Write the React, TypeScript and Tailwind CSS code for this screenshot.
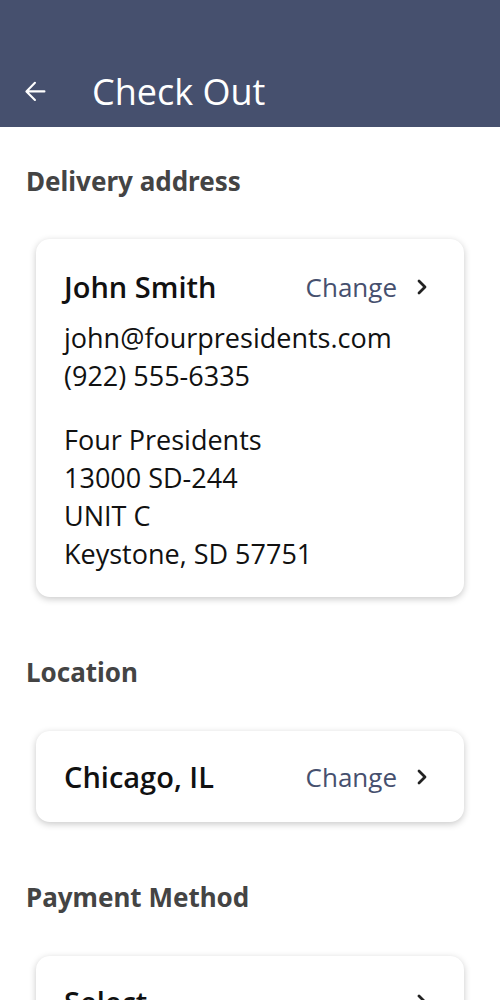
import React from "react";

const Chevron = () => (
  <svg width="12" height="16" viewBox="0 0 12 16" className="shrink-0">
    <path d="M3 2 L9 8 L3 14" fill="none" stroke="#222" strokeWidth="2.8" strokeLinecap="round" strokeLinejoin="round" />
  </svg>
);

const Change = () => (
  <div className="flex items-center">
    <span className="text-[26px] leading-[38px] text-[#46506e]">Change</span>
    <span className="ml-[19px]"><Chevron /></span>
  </div>
);

const Heading = ({ children }: { children: React.ReactNode }) => (
  <h2 className="text-[26px] leading-[32px] font-bold text-[#444]" style={{ fontFamily: '"Noto Sans", sans-serif' }}>{children}</h2>
);

const cardCls = "mx-[10px] bg-white rounded-[14px] shadow-[0_2px_7px_rgba(0,0,0,0.22)]";

export default function App() {
  return (
    <div className="w-[500px] h-[1000px] overflow-hidden bg-white" style={{ fontFamily: '"Open Sans", sans-serif' }}>
      <header className="h-[127px] bg-[#46506e] flex items-end pb-[12px]">
        <div className="flex items-center h-[46px]">
          <svg width="24" height="24" viewBox="0 0 24 24" className="ml-[24px]">
            <path d="M21 12 H3 M11 3 L2 12 L11 21" fill="none" stroke="#fff" strokeWidth="2.2" strokeLinecap="round" strokeLinejoin="round" transform="translate(0.5,0) scale(0.95)" />
          </svg>
          <h1 className="ml-[44px] text-white text-[36px] leading-[46px] font-normal">Check Out</h1>
        </div>
      </header>
      <main className="px-[26px]">
        <div className="pt-[38px]"><Heading>Delivery address</Heading></div>
        <div className={`${cardCls} mt-[42px] pt-[29px] pb-[24px] pl-[28px] pr-[36px] text-[#111]`}>
          <div className="flex items-center justify-between">
            <span className="text-[29px] leading-[38px] font-semibold">John Smith</span>
            <Change />
          </div>
          <div className="mt-[13px] text-[27px] leading-[38px]">
            <div>john@fourpresidents.com</div>
            <div>(922) 555-6335</div>
          </div>
          <div className="mt-[26px] text-[27px] leading-[38px]">
            <div>Four Presidents</div>
            <div>13000 SD-244</div>
            <div>UNIT C</div>
            <div>Keystone, SD 57751</div>
          </div>
        </div>
        <div className="mt-[59px]"><Heading>Location</Heading></div>
        <div className={`${cardCls} mt-[43px] h-[91px] pl-[28px] pr-[36px] flex items-center justify-between text-[#111]`}>
          <span className="text-[29px] leading-[38px] font-semibold">Chicago, IL</span>
          <Change />
        </div>
        <div className="mt-[59px]"><Heading>Payment Method</Heading></div>
        <div className={`${cardCls} mt-[43px] h-[91px] pl-[28px] pr-[36px] flex items-center justify-between text-[#111]`}>
          <span className="text-[29px] leading-[38px] font-semibold">Select</span>
          <Chevron />
        </div>
      </main>
    </div>
  );
}
